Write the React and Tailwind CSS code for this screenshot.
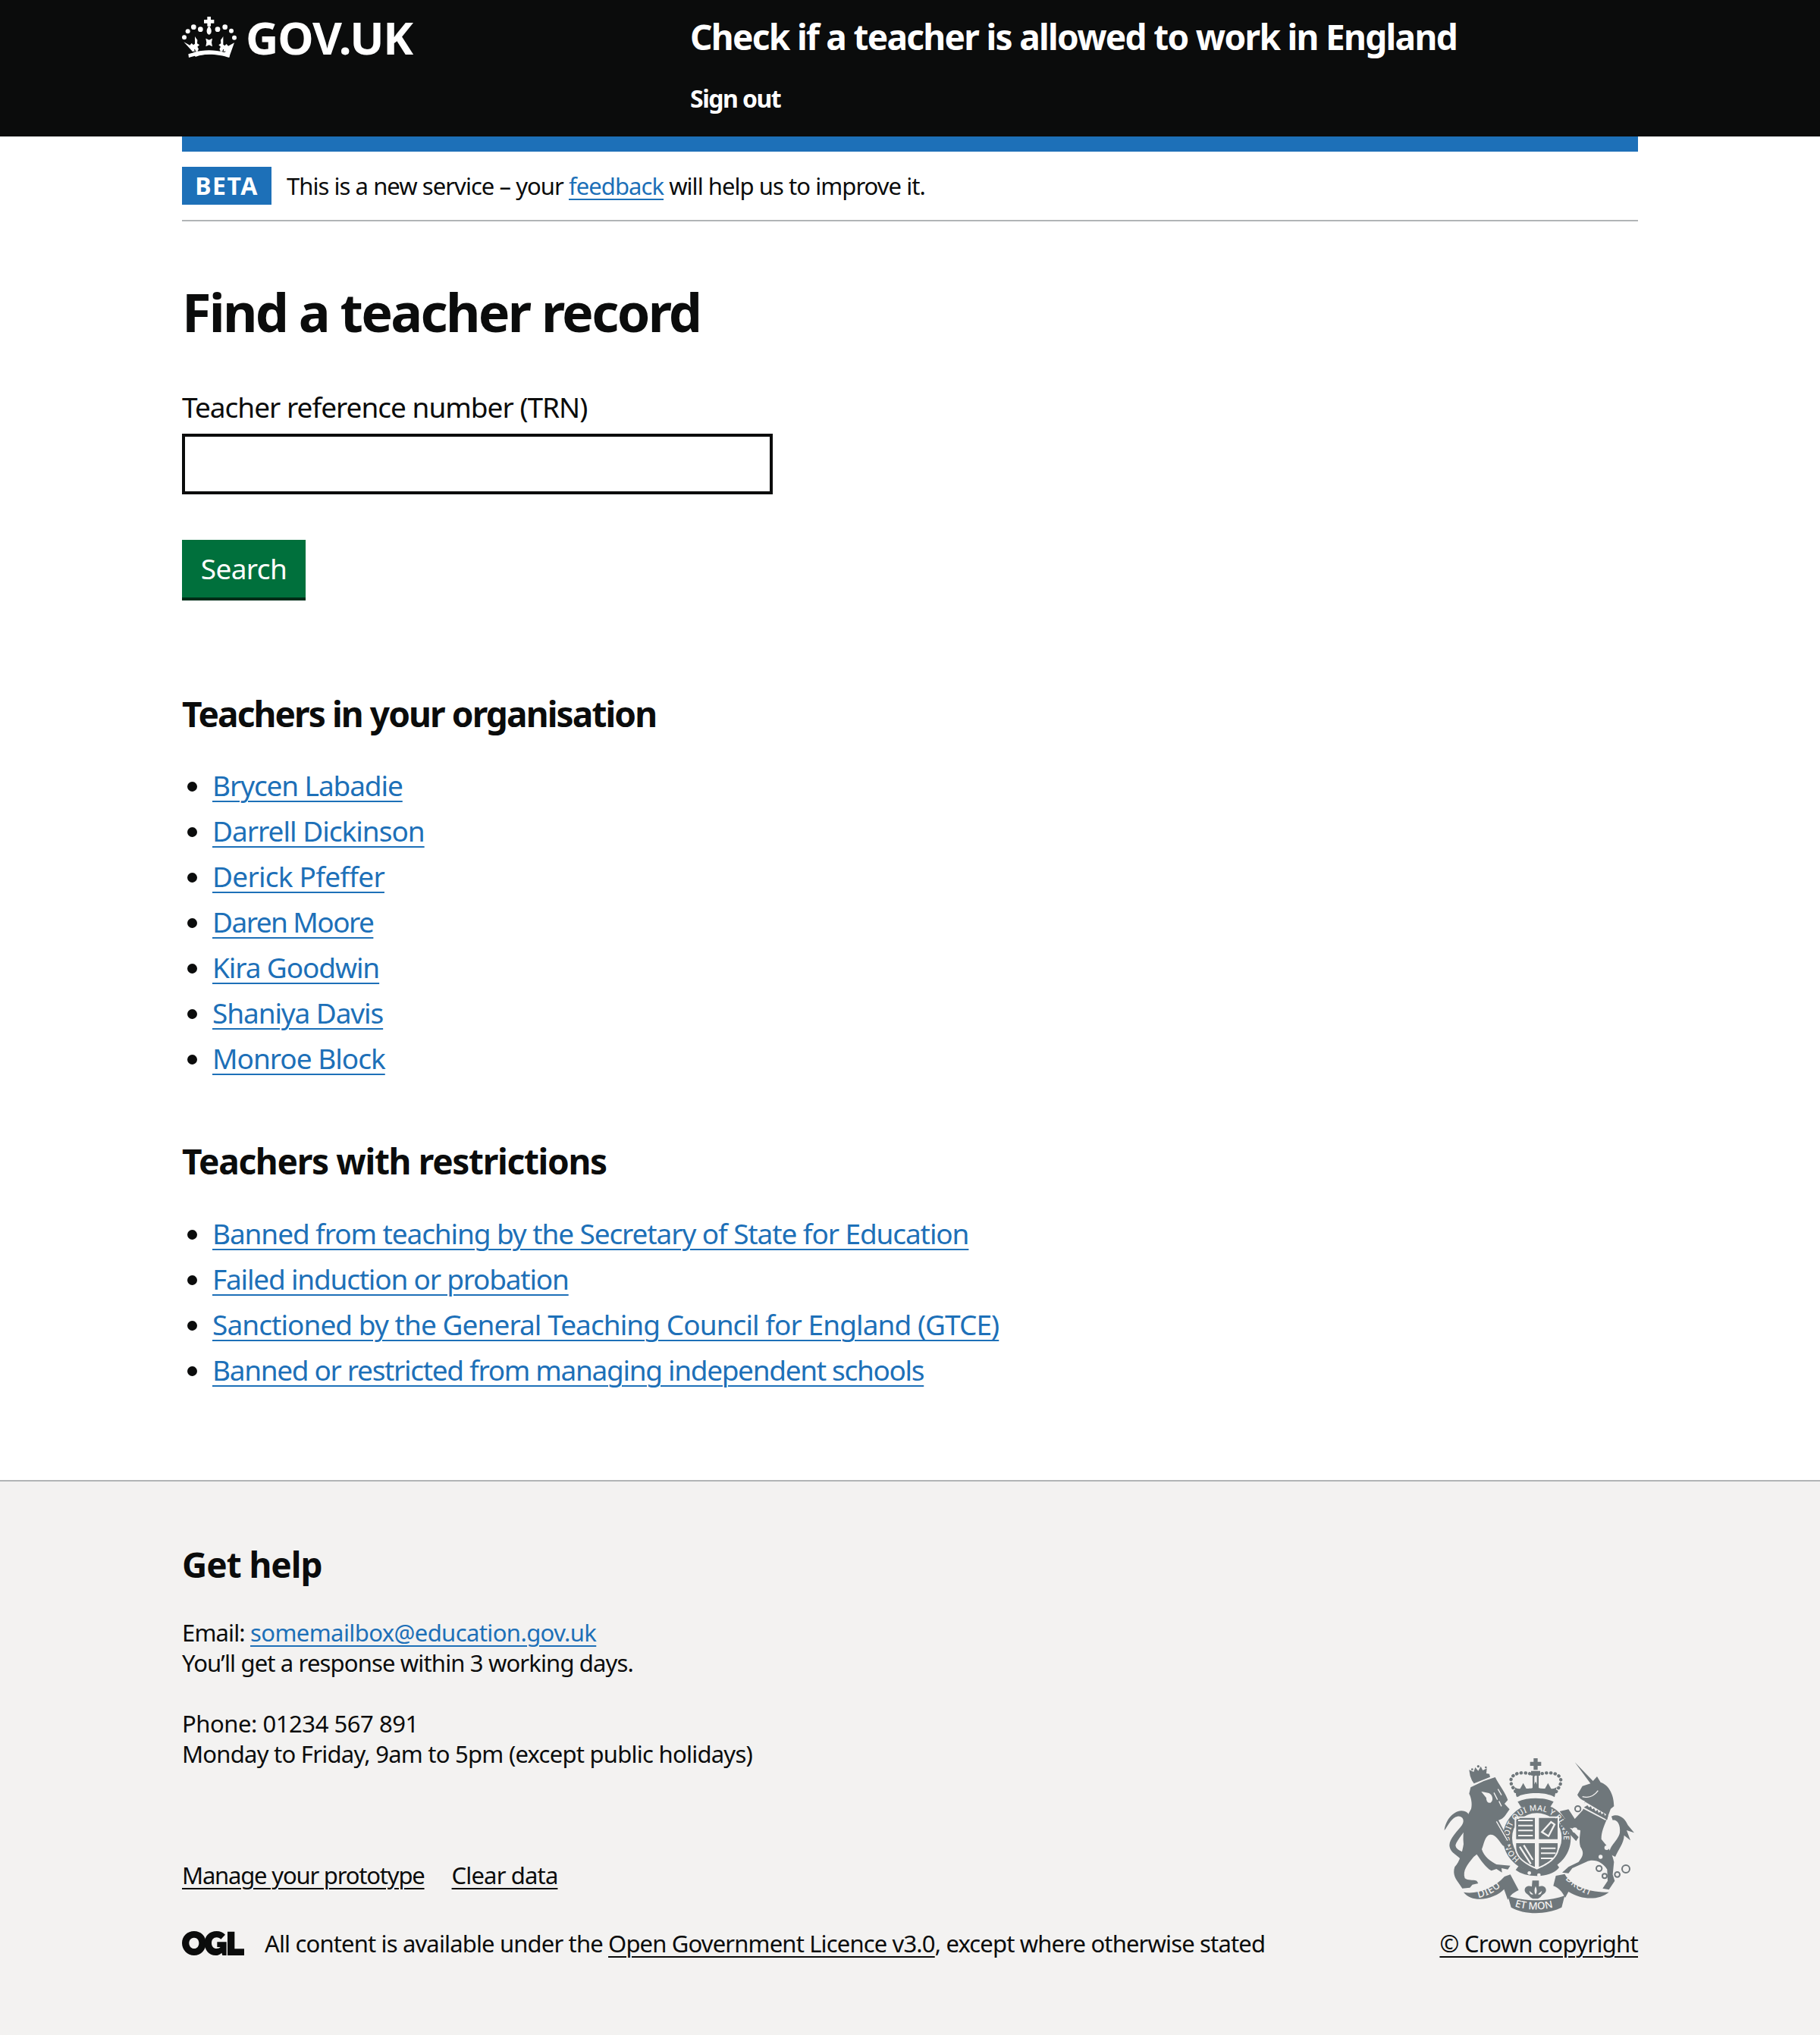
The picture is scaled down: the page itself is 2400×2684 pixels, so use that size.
const teachers = [
  ['Brycen Labadie', ''],
  ['Darrell Dickinson', 'tracking-[-1px]'],
  ['Derick Pfeffer', 'tracking-[-0.75px]'],
  ['Daren Moore', 'tracking-[-1.55px]'],
  ['Kira Goodwin', ''],
  ['Shaniya Davis', ''],
  ['Monroe Block', 'tracking-[-1px]'],
];
const restrictions = [
  ['Banned from teaching by the Secretary of State for Education', ''],
  ['Failed induction or probation', 'tracking-[-1.2px]'],
  ['Sanctioned by the General Teaching Council for England (GTCE)', 'tracking-[-0.93px]'],
  ['Banned or restricted from managing independent schools', 'tracking-[-1.32px]'],
];

function Crown() {
  return (
    <svg viewBox="0 0 255 195" className="w-[85px] h-[65px] shrink-0 -ml-[5px] -mt-[4px]" fill="#fff">
      <path d="M115 18h14v12h13v14h-13v12h-14V44h-13V30h13z" />
      <path d="M122 54c9 10 11 20 8 28-2 5-5 7-8 7s-6-2-8-7c-3-8-1-18 8-28z" />
      <circle cx="24" cy="100" r="9" /><circle cx="38" cy="76" r="9" /><circle cx="61" cy="59" r="10" /><circle cx="88" cy="68" r="10" />
      <circle cx="156" cy="68" r="10" /><circle cx="185" cy="59" r="10" /><circle cx="210" cy="74" r="9" /><circle cx="222" cy="101" r="9" />
      <path d="M22 118l16 9 8 4 7-8 7 7 6-5V96c2 4 6 9 10 14l-1 14 9 6-8 7 5 9c-3 5-4 7-4 9h-8l-3-9-3 3 3 6H54l8 4c18-5 40-8 60-8s42 3 60 8l8-4h-12l3-6-3-3-3 9h-8c0-2-1-4-4-9l5-9-8-7 9-6-1-14c4-5 8-10 10-14v32l6 5 7-7 7 8 8-4 16-9-15 42-5 14c-20-7-43-11-67-11s-47 4-67 11l-5-14z" />
      <path d="M109 104l13 6 13-6-3 16 3 16-13-6-13 6 3-16z" />
      <path d="M42 180c22-8 52-13 80-13s58 5 80 13l2-14c-24-8-54-12-82-12s-58 4-82 12z" />
    </svg>
  );
}

function OglLogo() {
  return (
    <svg viewBox="0 0 285 150" className="w-[95px] h-[50px] shrink-0 -ml-[5px] -my-2" fill="#0b0c0c">
      <path fillRule="evenodd" d="M63 27c27 0 47 20 47 47s-20 49-47 49-48-22-48-49 21-47 48-47zm0 26c-12 0-20 9-20 21s8 22 20 22 19-10 19-22-7-21-19-21z" />
      <path d="M152 27c14 0 26 5 34 14l-17 18c-4-4-10-7-17-7-12 0-20 9-20 22s8 22 20 22c7 0 12-2 15-6h-13V70h37v53h-16l-3-10c-7 7-15 10-24 10-27 0-44-22-44-49s19-47 48-47z" />
      <path d="M195 29h28v68h38v26h-66z" />
    </svg>
  );
}

function Arms() {
  return (
    <svg viewBox="0 0 960 690" className="w-[320px] h-[230px] mb-[14px] -mr-[20px]" fill="#6f777b">
      {/* royal crown */}
      <path d="M487 60h16v14h14v16h-14v16h-16V90h-14V74h14z" />
      <path d="M425 205c-12-18-28-36-28-55 0-22 24-34 50-32 20 0 36 6 48 8 12-2 30-8 50-8 26-2 50 10 50 32 0 19-16 37-28 55" fill="none" stroke="#6f777b" strokeWidth="13" strokeLinecap="round" strokeDasharray="1 16" />
      <path d="M483 130h7v50h-7zM500 130h7v50h-7zM477 110h36v18h-36z" />
      <path d="M420 214c18-12 50-16 75-16s57 4 75 16l8-40c-8 6-16 8-22 6l-12-22-12 22c-10 0-18 0-24-2l-13-26-13 26c-6 2-14 2-24 2l-12-22-12 22c-6 2-14 0-22-6z" />
      <path d="M424 232c20-10 46-14 71-14s51 4 71 14l-14 22c-16-6-36-8-57-8s-41 2-57 8z" />

      {/* garter, shield */}
      <circle cx="500" cy="375" r="116" fill="none" stroke="#6f777b" strokeWidth="36" />
      <path d="M412 290h176v118c0 50-50 76-88 92-38-16-88-42-88-92z" fill="#f3f2f1" />
      <path d="M418 296h74v84h-74zM508 296h74v84h-74z" />
      <path d="M418 396h74v94c-30-14-74-36-74-82zM508 396h74v12c0 46-44 68-74 82z" />
      <path d="M426 306h58M426 326h58M426 346h58M426 366h58M516 416h58M516 436h58M516 456h48" stroke="#f3f2f1" strokeWidth="6" fill="none" />
      <path d="M520 352l36-40 14 10-24 46zM432 410l44 68M448 404l36 58" stroke="#f3f2f1" strokeWidth="7" fill="none" />
      <defs>
        <path id="garter" d="M432 458A107 107 0 1 1 572 452" />
        <path id="left-ribbon" d="M268 612Q330 600 372 552" />
        <path id="mid-ribbon" d="M412 646Q495 672 584 644" />
        <path id="right-ribbon" d="M612 538Q660 590 738 612" />
      </defs>
      <text fill="#f3f2f1" fontFamily="Noto Sans" fontWeight="500" fontSize="31" letterSpacing="1"><textPath href="#garter">HON SOIT QUI MAL Y PENSE</textPath></text>
      <path d="M428 486c30 24 110 24 150-8l10 14c-30 42-130 44-172 10z" />
      <circle cx="470" cy="514" r="7" fill="#f3f2f1" /><circle cx="508" cy="522" r="7" fill="#f3f2f1" />

      {/* lion */}
      <path d="M238 175L290 150L335 135C350 165 375 195 385 225L372 240L392 262C375 285 370 300 348 305L395 395L375 385L392 420L365 405C350 385 335 360 315 362C295 365 290 400 282 420C290 450 320 470 340 480L395 485L385 500L360 495L362 512L340 498L320 505C295 490 280 465 262 440L250 450C225 480 205 505 215 535C228 545 245 540 262 545L268 555L245 560L235 572L205 575L195 560C180 540 165 520 175 490C195 470 205 430 210 400C205 350 215 300 240 260C245 240 240 215 232 200Z" />
      <path d="M236 130l-4-24 18 8 6-18 12 14 10-18 8 16 16-8-2 20 12 2 3 12-64 26-8-12z" />
      <circle cx="244" cy="104" r="4" /><circle cx="268" cy="92" r="5" /><circle cx="298" cy="96" r="4" />
      <path d="M285 195l25 5c14 8 16 26 6 34-10 2-16-8-14-18zM340 310l44 76" fill="#f3f2f1" stroke="#f3f2f1" strokeWidth="4" />
      <path d="M346 182l14 24M330 196l14 28M350 230l10 20" stroke="#f3f2f1" strokeWidth="4" fill="none" />
      <path d="M206 470c-12-26-50-32-52-66 0-26 34-58 50-80 12-18 2-36-18-34-22 4-34 30-52 56 4-40 34-76 66-78 30-2 40 24 30 52-8 24-46 60-52 84 2 22 30 20 40 40z" />

      {/* unicorn */}
      <path d="M650 76L722 150L738 132L752 155C785 165 805 205 805 250L792 260L775 305C765 330 755 350 755 380C770 400 795 420 805 470L800 520L808 545L785 580L760 575L780 545L778 500C760 470 725 455 695 470L640 495L625 515L600 512L625 490L665 470C680 450 690 435 672 410C665 385 672 360 672 345L630 335L665 372L655 388L612 340L590 315L612 300L590 270L625 262L650 300L682 265L690 230C680 225 670 222 660 205L680 170L712 160Z" />
      <path d="M690 232l88 52-6 22-92-48z" fill="#f3f2f1" />
      <path d="M686 254l92 50 4-16-6-8-6 8-6-12-8 6-4-12-8 6-4-12-8 6-6-12-8 4-4-12-8 4-6-8z" />
      <path d="M680 212c20 6 44 0 62-24" stroke="#f3f2f1" strokeWidth="4" fill="none" />
      <circle cx="662" cy="260" r="11" fill="none" stroke="#6f777b" strokeWidth="6" />
      <circle cx="650" cy="344" r="10" fill="#f3f2f1" /><circle cx="786" cy="368" r="11" fill="#f3f2f1" /><circle cx="776" cy="414" r="9" fill="#f3f2f1" /><circle cx="752" cy="450" r="8" fill="#f3f2f1" />
      <circle cx="746" cy="496" r="11" fill="none" stroke="#6f777b" strokeWidth="6" /><circle cx="768" cy="526" r="9" fill="none" stroke="#6f777b" strokeWidth="6" /><circle cx="818" cy="520" r="10" fill="none" stroke="#6f777b" strokeWidth="6" /><circle cx="852" cy="498" r="15" fill="none" stroke="#6f777b" strokeWidth="6" />
      <path d="M790 440C780 410 820 390 828 355C832 320 815 300 800 305L795 290C825 275 850 300 860 325L885 355L855 345L870 385L845 365C845 395 820 425 810 450Z" />

      {/* motto */}
      <path d="M210 590C260 600 330 575 372 528L395 520L428 582C410 590 395 600 385 620L370 578C340 612 250 640 210 590Z" />
      <path d="M385 604C450 628 545 628 610 604L598 650C540 680 450 680 398 650Z" />
      <path d="M575 525L610 518C640 570 710 590 785 590C745 622 680 622 625 588L612 612C600 590 590 575 565 565Z" />
      <text fill="#f3f2f1" fontFamily="Noto Sans" fontWeight="500" fontSize="40" letterSpacing="2"><textPath href="#left-ribbon">DIEU</textPath></text>
      <text fill="#f3f2f1" fontFamily="Noto Sans" fontWeight="500" fontSize="40"><textPath href="#mid-ribbon">ET MON</textPath></text>
      <text fill="#f3f2f1" fontFamily="Noto Sans" fontWeight="500" fontSize="36" letterSpacing="2"><textPath href="#right-ribbon">DROIT</textPath></text>
      <path d="M482 544h26v24c12-6 30 0 28 16-2 12-16 14-22 26l-10 6h-20l-10-6c-6-12-20-14-22-26-2-16 16-22 28-16z" />
      <path d="M495 566c-6 12-6 24 0 34 6-10 6-22 0-34zM470 584c6 6 12 10 16 14-6 4-14 0-16-14zM520 584c-6 6-12 10-16 14 6 4 14 0 16-14z" fill="#f3f2f1" />
    </svg>
  );
}

function LinkList({ items }) {
  return (
    <ul className="list-disc pl-10 text-[#1d70b8] marker:text-[#0b0c0c] text-[37px] leading-[50px] tracking-[-1.1px]">
      {items.map(([t, fit]) => (
        <li key={t} className="mb-[10px]">
          <a href="#" className={`underline decoration-2 underline-offset-[6px] ${fit}`}>{t}</a>
        </li>
      ))}
    </ul>
  );
}

export default function App() {
  return (
    <div className="min-h-[2684px] flex flex-col bg-white text-[#0b0c0c] font-['Noto_Sans',sans-serif]">
      <header className="bg-[#0b0c0c] h-[180px] text-white">
        <div className="w-[1920px] mx-auto flex pt-[20px]">
          <div className="w-[670px] flex items-start">
            <Crown />
            <span className="ml-[4px] mt-[-6px] text-[60px] leading-[70px] font-bold tracking-[-1.2px]">GOV.UK</span>
          </div>
          <div>
            <div className="-mt-[2px] text-[46px] leading-[60px] font-bold tracking-[-1.7px]">Check if a teacher is allowed to work in England</div>
            <a href="#" className="block mt-[32px] text-[32px] leading-[40px] font-bold tracking-[-1.5px]">Sign out</a>
          </div>
        </div>
      </header>

      <main className="w-[1920px] mx-auto">
        <div className="h-[20px] bg-[#1d70b8]" />
        <div className="flex items-center h-[92px] border-b-2 border-[#b1b4b6]">
          <strong className="bg-[#1d70b8] text-white h-[50px] w-[118px] flex items-center justify-center text-[32px] font-bold tracking-[1.5px]">BETA</strong>
          <p className="ml-[20px] text-[31px] leading-[40px] tracking-[-0.95px]">
            This is a new service – your <a href="#" className="text-[#1d70b8] underline decoration-2 underline-offset-[5px]">feedback</a> will help us to improve it.
          </p>
        </div>

        <h1 className="mt-[74px] text-[70px] leading-[90px] font-bold tracking-[-2.7px]">Find a teacher record</h1>
        <label className="block mt-[56px] text-[37px] leading-[50px] tracking-[-1px]">Teacher reference number (TRN)</label>
        <input className="block mt-[10px] w-[779px] h-[80px] border-4 border-[#0b0c0c] bg-white" />
        <button className="block mt-[60px] bg-[#00703c] text-white text-[37px] leading-[50px] h-[80px] w-[163px] border-b-4 border-[#002d18] tracking-[-0.6px]">Search</button>

        <h2 className="mt-[119px] text-[46px] leading-[60px] font-bold tracking-[-1.9px]">Teachers in your organisation</h2>
        <div className="mt-[40px]"><LinkList items={teachers} /></div>
        <h2 className="mt-[80px] text-[46px] leading-[60px] font-bold tracking-[-1.3px]">Teachers with restrictions</h2>
        <div className="mt-[41px]"><LinkList items={restrictions} /></div>
      </main>

      <footer className="mt-auto h-[732px] bg-[#f3f2f1] border-t-2 border-[#b1b4b6]">
        <div className="w-[1920px] mx-auto h-full flex flex-col">
          <h2 className="mt-[79px] text-[46px] leading-[60px] font-bold tracking-[-1.05px]">Get help</h2>
          <div className="mt-[40px] text-[31px] leading-[40px] tracking-[-0.85px]">
            <p>Email: <a href="#" className="text-[#1d70b8] underline decoration-2 underline-offset-[5px] tracking-[-0.6px]">somemailbox@education.gov.uk</a></p>
            <p>You’ll get a response within 3 working days.</p>
            <p className="mt-[40px] tracking-[-0.45px]">Phone: 01234 567 891</p>
            <p className="tracking-[-0.75px]">Monday to Friday, 9am to 5pm (except public holidays)</p>
          </div>
          <div className="flex justify-between items-end mt-[38px]">
            <div className="text-[31px] leading-[40px] tracking-[-0.85px]">
              <div className="flex gap-[36px] mb-[50px]">
                <a href="#" className="underline decoration-2 underline-offset-[5px] tracking-[-1.2px]">Manage your prototype</a>
                <a href="#" className="underline decoration-2 underline-offset-[5px]">Clear data</a>
              </div>
              <div className="flex items-center">
                <OglLogo />
                <span className="ml-[19px]">All content is available under the <a href="#" className="underline decoration-2 underline-offset-[5px]">Open Government Licence v3.0</a>, except where otherwise stated</span>
              </div>
            </div>
            <div className="flex flex-col items-end -mt-[72px]">
              <Arms />
              <a href="#" className="text-[31px] leading-[40px] tracking-[-0.7px] underline decoration-2 underline-offset-[5px]">© Crown copyright</a>
            </div>
          </div>
        </div>
      </footer>
    </div>
  );
}
